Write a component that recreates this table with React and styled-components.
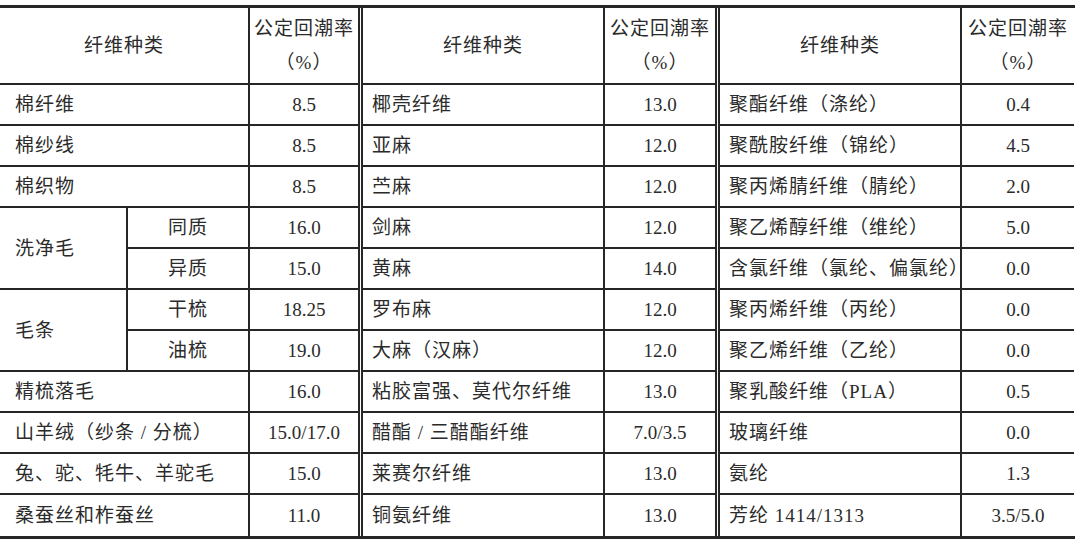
import styled, { createGlobalStyle } from "styled-components";

const GlobalStyle = createGlobalStyle`
    body {
        margin: 0;
        background: #fff;
        color: #2b2b2b;
        font-family: "Liberation Serif", "Noto Sans CJK SC", serif;
    }
`;

const LINE = "#262626";

const Table = styled.div`
    display: flex;
    width: 1075px;
    margin-top: 5px;
    border-top: 3px solid ${LINE};
    border-bottom: 3px solid ${LINE};
`;

const Group = styled.div`
    display: grid;
    grid-template-columns: ${(p) => p.$cols};
    grid-template-rows: 77px repeat(11, 41px);
`;

const Divider = styled.div`
    width: 5px;
    box-sizing: border-box;
    border-left: 2px solid ${LINE};
    border-right: 2px solid ${LINE};
`;

const Cell = styled.div`
    box-sizing: border-box;
    display: flex;
    align-items: center;
    justify-content: ${(p) => (p.$left ? "flex-start" : "center")};
    padding-left: ${(p) => (p.$left ? p.$pad : 0)}px;
    grid-column: ${(p) => p.$col || "auto"};
    grid-row: ${(p) => p.$row || "auto"};
    border-bottom: ${(p) => (p.$last ? "none" : `2px solid ${LINE}`)};
    border-right: ${(p) => (p.$edge ? `2px solid ${LINE}` : "none")};
    font-size: 19px;
    line-height: 1;
    letter-spacing: ${(p) => (p.$left || p.$cjk ? "1px" : "0")};
    white-space: nowrap;
`;

const HeadCell = styled(Cell)`
    flex-direction: column;
    line-height: 34px;
    letter-spacing: 1px;
`;

const group1 = [
    ["棉纤维", "8.5"],
    ["棉纱线", "8.5"],
    ["棉织物", "8.5"],
    ["洗净毛", [["同质", "16.0"], ["异质", "15.0"]]],
    ["毛条", [["干梳", "18.25"], ["油梳", "19.0"]]],
    ["精梳落毛", "16.0"],
    ["山羊绒（纱条 / 分梳）", "15.0/17.0"],
    ["兔、驼、牦牛、羊驼毛", "15.0"],
    ["桑蚕丝和柞蚕丝", "11.0"],
];

const group2 = [
    ["椰壳纤维", "13.0"],
    ["亚麻", "12.0"],
    ["苎麻", "12.0"],
    ["剑麻", "12.0"],
    ["黄麻", "14.0"],
    ["罗布麻", "12.0"],
    ["大麻（汉麻）", "12.0"],
    ["粘胶富强、莫代尔纤维", "13.0"],
    ["醋酯 / 三醋酯纤维", "7.0/3.5"],
    ["莱赛尔纤维", "13.0"],
    ["铜氨纤维", "13.0"],
];

const group3 = [
    ["聚酯纤维（涤纶）", "0.4"],
    ["聚酰胺纤维（锦纶）", "4.5"],
    ["聚丙烯腈纤维（腈纶）", "2.0"],
    ["聚乙烯醇纤维（维纶）", "5.0"],
    ["含氯纤维（氯纶、偏氯纶）", "0.0"],
    ["聚丙烯纤维（丙纶）", "0.0"],
    ["聚乙烯纤维（乙纶）", "0.0"],
    ["聚乳酸纤维（PLA）", "0.5"],
    ["玻璃纤维", "0.0"],
    ["氨纶", "1.3"],
    ["芳纶 1414/1313", "3.5/5.0"],
];

function Header({ nameCol }) {
    return (
        <>
            <HeadCell $col={nameCol} $edge>纤维种类</HeadCell>
            <HeadCell>
                <span>公定回潮率</span>
                <span>（%）</span>
            </HeadCell>
        </>
    );
}

function WoolGroup() {
    let row = 2;
    const cells = [];
    group1.forEach(([name, value], i) => {
        const last = i === group1.length - 1;
        if (Array.isArray(value)) {
            cells.push(
                <Cell key={name} $left $pad={15} $edge $col="1" $row={`${row} / span 2`}>
                    {name}
                </Cell>
            );
            value.forEach(([sub, v], j) => {
                cells.push(<Cell key={sub} $cjk $edge $col="2" $row={`${row + j}`}>{sub}</Cell>);
                cells.push(<Cell key={sub + v} $col="3" $row={`${row + j}`}>{v}</Cell>);
            });
            row += 2;
        } else {
            cells.push(
                <Cell key={name} $left $pad={15} $edge $col="1 / span 2" $row={`${row}`} $last={last}>
                    {name}
                </Cell>
            );
            cells.push(<Cell key={name + value} $col="3" $row={`${row}`} $last={last}>{value}</Cell>);
            row += 1;
        }
    });
    return (
        <Group $cols="128px 122px 108px">
            <Header nameCol="1 / span 2" />
            {cells}
        </Group>
    );
}

function SimpleGroup({ rows, cols }) {
    return (
        <Group $cols={cols}>
            <Header />
            {rows.map(([name, value], i) => {
                const last = i === rows.length - 1;
                return [
                    <Cell key={name} $left $pad={9} $edge $last={last}>{name}</Cell>,
                    <Cell key={name + "v"} $last={last}>{value}</Cell>,
                ];
            })}
        </Group>
    );
}

export default function App() {
    return (
        <>
            <GlobalStyle />
            <Table>
                <WoolGroup />
                <Divider />
                <SimpleGroup rows={group2} cols="242px 110px" />
                <Divider />
                <SimpleGroup rows={group3} cols="242px 112px" />
            </Table>
        </>
    );
}
